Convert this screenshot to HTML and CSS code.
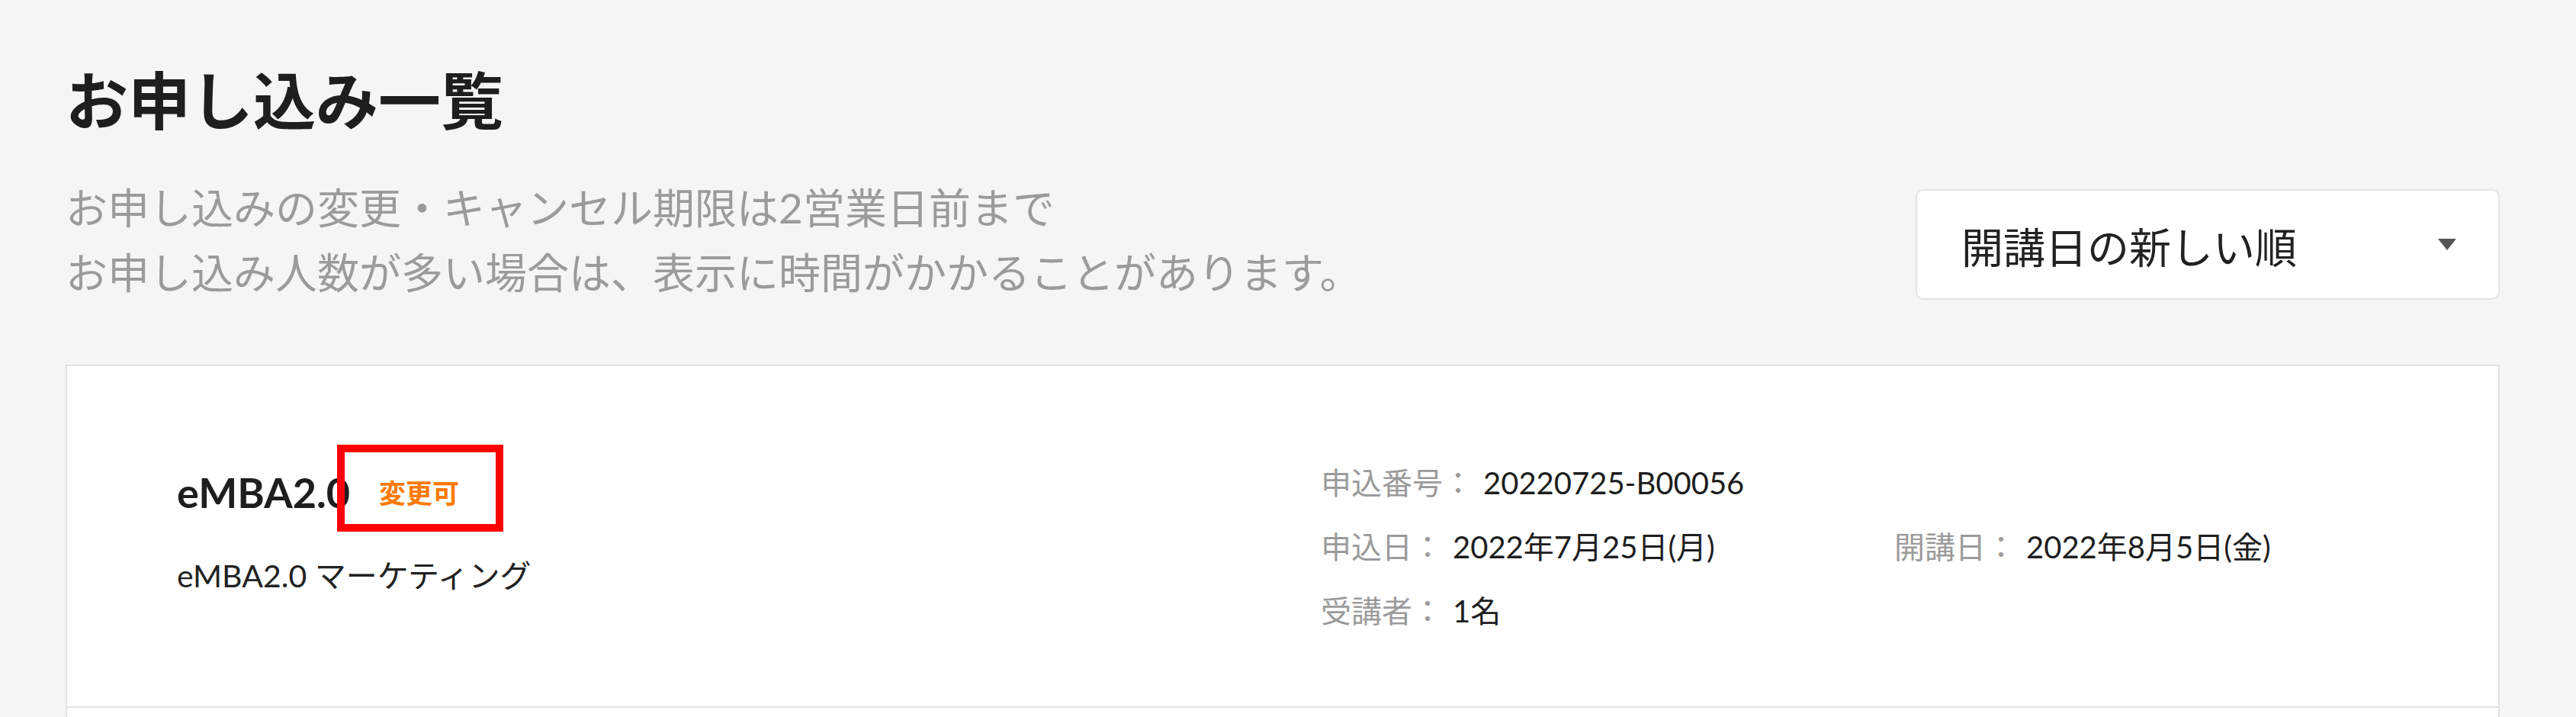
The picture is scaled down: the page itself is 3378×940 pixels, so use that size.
FILE: index.html
```html
<!DOCTYPE html>
<html lang="ja">
<head>
  <meta charset="UTF-8" />
  <meta name="viewport" content="width=device-width, initial-scale=1.0" />
  <title>お申し込み一覧</title>
  <link rel="stylesheet" href="styles.css">
</head>
<body>

<div class="page">
  <h1>お申し込み一覧</h1>

  <div class="head">
    <p class="note">
      お申し込みの変更・キャンセル期限は2営業日前まで<br>
      お申し込み人数が多い場合は、表示に時間がかかることがあります。
    </p>
    <div class="sort">
      <span>開講日の新しい順</span>
      <span class="caret"></span>
    </div>
  </div>

  <div class="list">
    <div class="order">
      <div class="course">
        <div class="course-title">
          <span class="name">eMBA2.0</span>
          <span class="badge">変更可</span>
          <span class="mark"></span>
        </div>
        <div class="course-sub">eMBA2.0 マーケティング</div>
      </div>
      <div class="info">
        <div class="item"><span class="label">申込番号：</span><span class="value">20220725-B00056</span></div>
        <div class="item"></div>
        <div class="item"><span class="label">申込日：</span><span class="value">2022年7月25日(月)</span></div>
        <div class="item"><span class="label">開講日：</span><span class="value">2022年8月5日(金)</span></div>
        <div class="item"><span class="label">受講者：</span><span class="value">1名</span></div>
      </div>
    </div>
    <div class="order"></div>
  </div>
</div>

</body>
</html>
```

FILE: styles.css
```css
html, body {
  margin: 0;
  background: #f5f5f5;
}
body {
  font-family: Lato, "Noto Sans CJK JP", sans-serif;
  color: #222;
}
.page {
  height: 100vh;
  overflow: hidden;
  box-sizing: border-box;
  padding: 82px 100px 0 86px;
}
h1 {
  margin: 0;
  font-size: 82px;
  line-height: 98px;
  font-weight: 700;
  color: #1e1e1e;
}

.head {
  display: flex;
  justify-content: space-between;
  align-items: flex-start;
  margin-top: 50px;
}
.note {
  margin: 0;
  font-size: 55px;
  line-height: 85px;
  color: #9b9b9b;
}
.sort {
  margin-top: 18px;
  width: 766px;
  height: 145px;
  box-sizing: border-box;
  display: flex;
  justify-content: space-between;
  align-items: center;
  padding: 0 55px 0 58px;
  background: #fff;
  border: 2px solid #e4e4e4;
  border-radius: 10px;
  font-size: 55px;
  color: #222;
}
.caret {
  width: 0;
  height: 0;
  border-left: 12px solid transparent;
  border-right: 12px solid transparent;
  border-top: 15px solid #555;
}

.list {
  margin-top: 78px;
  background: #fff;
  border: 2px solid #e2e2e2;
}
.order {
  height: 448px;
  box-sizing: border-box;
  display: flex;
  align-items: flex-start;
  padding: 0 144px;
  border-bottom: 2px solid #e2e2e2;
}
.course {
  flex: none;
  width: 1500px;
  margin-top: 134px;
}
.course-title {
  position: relative;
  display: flex;
  align-items: center;
  gap: 38px;
  line-height: 64px;
}
.name {
  font-size: 54px;
  font-weight: 700;
  color: #1e1e1e;
}
.badge {
  font-size: 35px;
  font-weight: 700;
  color: #ff7a00;
}
.mark {
  position: absolute;
  left: 210px;
  top: -31px;
  width: 218px;
  height: 114px;
  box-sizing: border-box;
  border: 10px solid #ff0000;
}
.course-sub {
  margin-top: 49px;
  font-size: 41px;
  line-height: 56px;
}

.info {
  margin-top: 111px;
  display: grid;
  grid-template-columns: 752px auto;
  font-size: 40px;
  line-height: 84px;
}
.label {
  color: #9b9b9b;
  margin-right: 13px;
}
.value {
  color: #1e1e1e;
}
```
